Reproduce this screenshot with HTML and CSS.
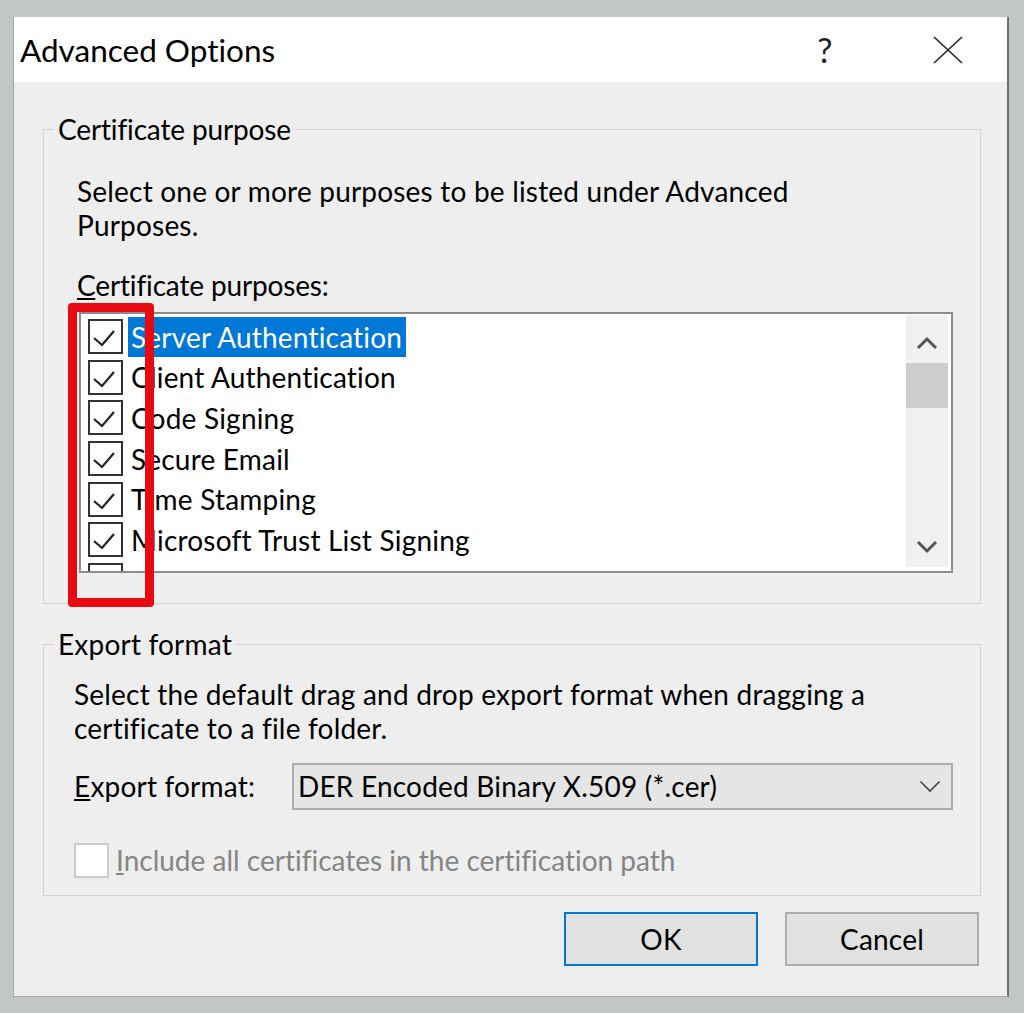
FILE: index.html
```html
<!DOCTYPE html>
<html lang="en">
<head>
<meta charset="utf-8">
<title>Advanced Options</title>
<link rel="stylesheet" href="styles.css">
</head>
<body>
<div class="dialog">
  <div class="titlebar">
    <div class="title">Advanced Options</div>
    <div class="help">?</div>
    <div class="close">
      <svg width="30" height="28" viewBox="0 0 30 28"><path d="M1 1 L29 27 M29 1 L1 27" stroke="#2b2b2b" stroke-width="1.7" fill="none"/></svg>
    </div>
  </div>
  <div class="content">
    <fieldset class="group">
      <legend class="tight">Certificate purpose</legend>
      <div class="group-body purpose-body">
        <p class="desc">Select one or more purposes to be listed under Advanced<br>Purposes.</p>
        <p class="list-label tight"><u>C</u>ertificate purposes:</p>
        <div class="listbox">
          <ul class="items">
            <li class="item"><span class="cb"><svg width="31" height="31" viewBox="0 0 31 31"><path d="M4 17 L12 24 L24 10" stroke="#222" stroke-width="2.2" fill="none"/></svg></span><span class="item-text selected">Server Authentication</span></li>
            <li class="item"><span class="cb"><svg width="31" height="31" viewBox="0 0 31 31"><path d="M4 17 L12 24 L24 10" stroke="#222" stroke-width="2.2" fill="none"/></svg></span><span class="item-text">Client Authentication</span></li>
            <li class="item"><span class="cb"><svg width="31" height="31" viewBox="0 0 31 31"><path d="M4 17 L12 24 L24 10" stroke="#222" stroke-width="2.2" fill="none"/></svg></span><span class="item-text">Code Signing</span></li>
            <li class="item"><span class="cb"><svg width="31" height="31" viewBox="0 0 31 31"><path d="M4 17 L12 24 L24 10" stroke="#222" stroke-width="2.2" fill="none"/></svg></span><span class="item-text">Secure Email</span></li>
            <li class="item"><span class="cb"><svg width="31" height="31" viewBox="0 0 31 31"><path d="M4 17 L12 24 L24 10" stroke="#222" stroke-width="2.2" fill="none"/></svg></span><span class="item-text">Time Stamping</span></li>
            <li class="item"><span class="cb"><svg width="31" height="31" viewBox="0 0 31 31"><path d="M4 17 L12 24 L24 10" stroke="#222" stroke-width="2.2" fill="none"/></svg></span><span class="item-text">Microsoft Trust List Signing</span></li>
            <li class="item"><span class="cb"></span><span class="item-text"></span></li>
          </ul>
          <div class="scrollbar">
            <div class="sb-btn"><svg width="22" height="16" viewBox="0 0 22 16"><path d="M2 13 L11 4 L20 13" stroke="#555" stroke-width="3" fill="none"/></svg></div>
            <div class="sb-thumb"></div>
            <div class="sb-track"></div>
            <div class="sb-btn"><svg width="22" height="16" viewBox="0 0 22 16"><path d="M2 3 L11 12 L20 3" stroke="#555" stroke-width="3" fill="none"/></svg></div>
          </div>
        </div>
      </div>
    </fieldset>

    <fieldset class="group export-group">
      <legend>Export format</legend>
      <div class="group-body export-body">
        <p class="desc">Select the default drag and drop export format when dragging a<br>certificate to a file folder.</p>
        <div class="format-row">
          <span class="format-label"><u>E</u>xport format:</span>
          <div class="combo">
            <span class="combo-text">DER Encoded Binary X.509 (*.cer)</span>
            <svg width="22" height="13" viewBox="0 0 22 13"><path d="M1.5 1.5 L11 11 L20.5 1.5" stroke="#444" stroke-width="1.6" fill="none"/></svg>
          </div>
        </div>
        <div class="include">
          <span class="cb cb-disabled"></span>
          <span class="include-text"><u>I</u>nclude all certificates in the certification path</span>
        </div>
      </div>
    </fieldset>

    <div class="buttons">
      <button class="btn btn-default">OK</button>
      <button class="btn">Cancel</button>
    </div>
  </div>
  <div class="highlight-box"></div>
</div>
</body>
</html>
```

FILE: styles.css
```css
body {
  margin: 0;
  background: #c0c7c4;
  font-family: Lato, "Open Sans", sans-serif;
  font-variant-ligatures: none;
  color: #000;
}

.dialog {
  position: relative;
  box-sizing: border-box;
  width: 996px;
  height: 980px;
  margin: 17px 0 0 13px;
  background: #eeeeee;
  border-left: 1px solid #a3a8a6;
  border-right: 2px solid #6f6f6f;
  border-bottom: 1px solid #a8a8a8;
  letter-spacing: 0.2px;
}

.titlebar {
  display: flex;
  align-items: center;
  height: 65px;
  background: #fff;
  padding-left: 6px;
}

.title {
  flex: 1;
  font-size: 31.5px;
  line-height: 40px;
  letter-spacing: 0;
}

.help {
  width: 60px;
  text-align: center;
  font-size: 34px;
  line-height: 40px;
  color: #222;
}

.close {
  width: 60px;
  margin-left: 63px;
  margin-right: 29px;
  display: flex;
  justify-content: center;
}

.content {
  padding: 32px 26px 0 29px;
}

.group {
  margin: 0;
  padding: 0;
  border: 1px solid #d3d3d3;
  min-width: 0;
}

.group legend {
  margin-left: 10px;
  padding: 0 4px;
  font-size: 28px;
  line-height: 30px;
}

.tight {
  letter-spacing: -0.15px;
}

.export-group {
  margin-top: 25.5px;
}

.purpose-body {
  padding: 30px 27px 30px 33px;
}

.export-body {
  padding: 18px 27px 17px 30px;
}

.desc {
  margin: 0;
  font-size: 28px;
  line-height: 34px;
}

.list-label {
  margin: 26px 0 0;
  font-size: 28px;
  line-height: 34px;
}

.listbox {
  box-sizing: border-box;
  display: flex;
  height: 261px;
  margin: 9.5px 0 0 2px;
  border: 2px solid #8c8c8c;
  background: #fff;
  overflow: hidden;
}

.items {
  flex: 1;
  list-style: none;
  margin: 0;
  padding: 3px 0 0 7px;
  overflow: hidden;
}

.item {
  display: flex;
  align-items: center;
  height: 40.6px;
}

.cb {
  box-sizing: border-box;
  flex: none;
  width: 35px;
  height: 35px;
  border: 2px solid #333;
  background: #fff;
}

.cb svg {
  display: block;
}

.item-text {
  margin-left: 5px;
  padding: 0 4px 0 3px;
  font-size: 28px;
  line-height: 40px;
  white-space: nowrap;
}

.item-text.selected {
  background: #0078d7;
  color: #fff;
}

.scrollbar {
  flex: none;
  display: flex;
  flex-direction: column;
  width: 42px;
  margin: 1px 3px 4px 0;
  background: #f0f0f0;
}

.sb-btn {
  box-sizing: border-box;
  height: 48px;
  padding-top: 8px;
  display: flex;
  align-items: center;
  justify-content: center;
}

.sb-thumb {
  height: 45px;
  background: #cdcdcd;
}

.sb-track {
  flex: 1;
}

.format-row {
  display: flex;
  align-items: center;
  margin-top: 17.5px;
}

.format-label {
  flex: none;
  width: 218px;
  font-size: 28px;
  line-height: 34px;
}

.combo {
  box-sizing: border-box;
  flex: 1;
  display: flex;
  align-items: center;
  height: 47px;
  padding: 0 10px 0 4px;
  background: #e5e5e5;
  border: 2px solid #adadad;
}

.combo-text {
  flex: 1;
  font-size: 28px;
  line-height: 34px;
}

.include {
  display: flex;
  align-items: center;
  margin-top: 33px;
}

.cb-disabled {
  border-color: #cccccc;
}

.include-text {
  margin-left: 7px;
  font-size: 28px;
  line-height: 34px;
  letter-spacing: 0;
  color: #858585;
}

.buttons {
  display: flex;
  justify-content: flex-end;
  gap: 27px;
  margin-top: 16px;
  margin-right: 2px;
}

.btn {
  box-sizing: border-box;
  width: 194px;
  height: 54px;
  padding: 0;
  font-family: Lato, "Open Sans", sans-serif;
  font-variant-ligatures: none;
  letter-spacing: 0.2px;
  font-size: 28px;
  color: #000;
  background: #e1e1e1;
  border: 2px solid #adadad;
}

.btn-default {
  border-color: #0078d7;
}

.highlight-box {
  position: absolute;
  left: 54px;
  top: 286px;
  width: 86px;
  height: 304px;
  box-sizing: border-box;
  border: 9px solid #e80a10;
  border-radius: 4px;
}
```
